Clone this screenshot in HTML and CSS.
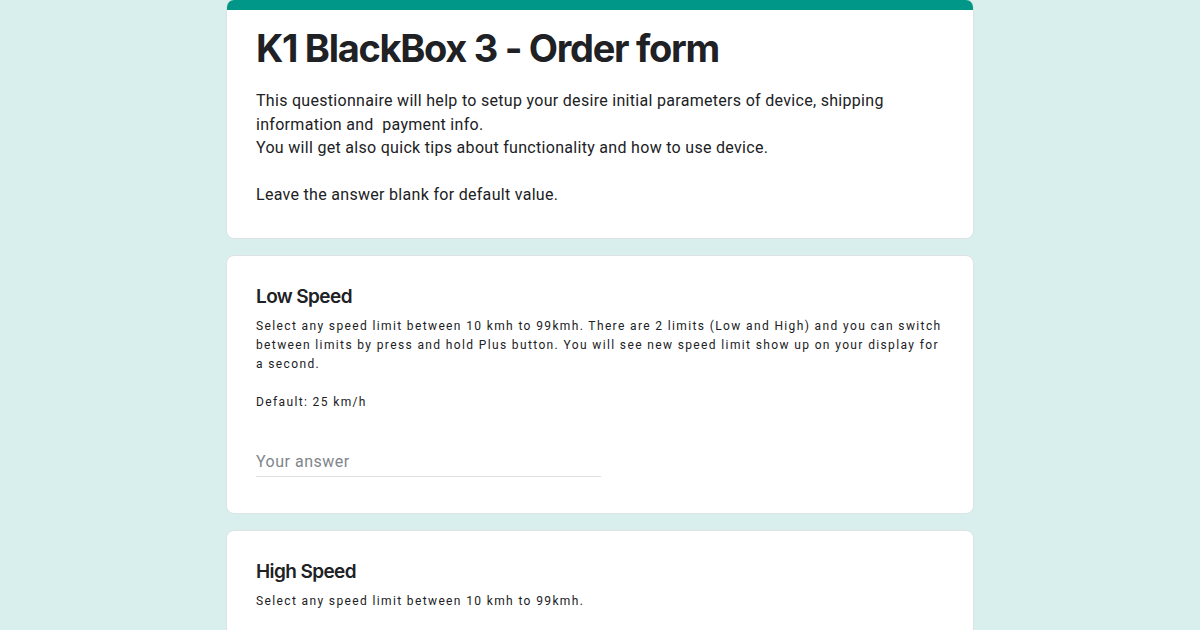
FILE: index.html
```html
<!DOCTYPE html>
<html lang="en">
<head>
<meta charset="UTF-8">
<title>K1 BlackBox 3 - Order form</title>
<link rel="stylesheet" href="styles.css">
</head>
<body>
  <div class="form">
    <div class="card header-card">
      <div class="band"></div>
      <div class="card-body">
        <h1 class="title">K1 BlackBox 3 - Order form</h1>
        <p class="intro">This questionnaire will help to setup your desire initial parameters of device, shipping information and&nbsp; payment info.<br>You will get also quick tips about functionality and how to use device.<br><br>Leave the answer blank for default value.</p>
      </div>
    </div>

    <div class="card question">
      <div class="card-body">
        <h2 class="q-title">Low Speed</h2>
        <p class="q-help">Select any speed limit between 10 kmh to 99kmh. There are 2 limits (Low and High) and you can switch between limits by press and hold Plus button. You will see new speed limit show up on your display for a second.<br><br>Default: 25 km/h</p>
        <input class="answer" type="text" placeholder="Your answer">
      </div>
    </div>

    <div class="card question">
      <div class="card-body">
        <h2 class="q-title">High Speed</h2>
        <p class="q-help">Select any speed limit between 10 kmh to 99kmh.</p>
      </div>
    </div>
  </div>
</body>
</html>
```

FILE: styles.css
```css
body {
  margin: 0;
  padding: 0;
  background-color: #d9efed;
  font-family: Roboto, Arial, sans-serif;
  color: #202124;
  height: 630px;
  overflow: hidden;
}

.form {
  width: 748px;
  margin: -1px auto 0;
  display: flex;
  flex-direction: column;
  gap: 16px;
}

.card {
  background-color: #ffffff;
  border-radius: 8px;
  border: 1px solid #dde3e2;
  overflow: hidden;
}

.band {
  height: 10px;
  background-color: #009688;
}

.card-body {
  padding: 24px 29px 24px 29px;
}

.header-card .card-body {
  padding-top: 16px;
  padding-bottom: 31px;
}

.title {
  font-family: Inter, "Open Sans", sans-serif;
  font-weight: 700;
  font-size: 38px;
  letter-spacing: -1.3px;
  line-height: 44px;
  margin: 0 0 19px;
}

.intro {
  font-size: 16px;
  line-height: 23.5px;
  letter-spacing: 0.3px;
  margin: 0;
}

.q-title {
  font-family: Inter, "Open Sans", sans-serif;
  font-weight: 600;
  font-size: 19px;
  letter-spacing: -0.6px;
  line-height: 26px;
  margin: 4px 0 7px;
}

.q-help {
  font-size: 12px;
  line-height: 19px;
  letter-spacing: 1.37px;
  margin: 0;
}

.answer {
  display: block;
  width: 345px;
  margin-top: 40px;
  margin-bottom: 12px;
  padding: 0 0 5px;
  border: none;
  border-bottom: 1px solid #e0e0e0;
  font-family: Roboto, Arial, sans-serif;
  font-size: 16px;
  letter-spacing: 0.5px;
  outline: none;
  background: transparent;
}

.answer::placeholder {
  color: #80868b;
}
```
